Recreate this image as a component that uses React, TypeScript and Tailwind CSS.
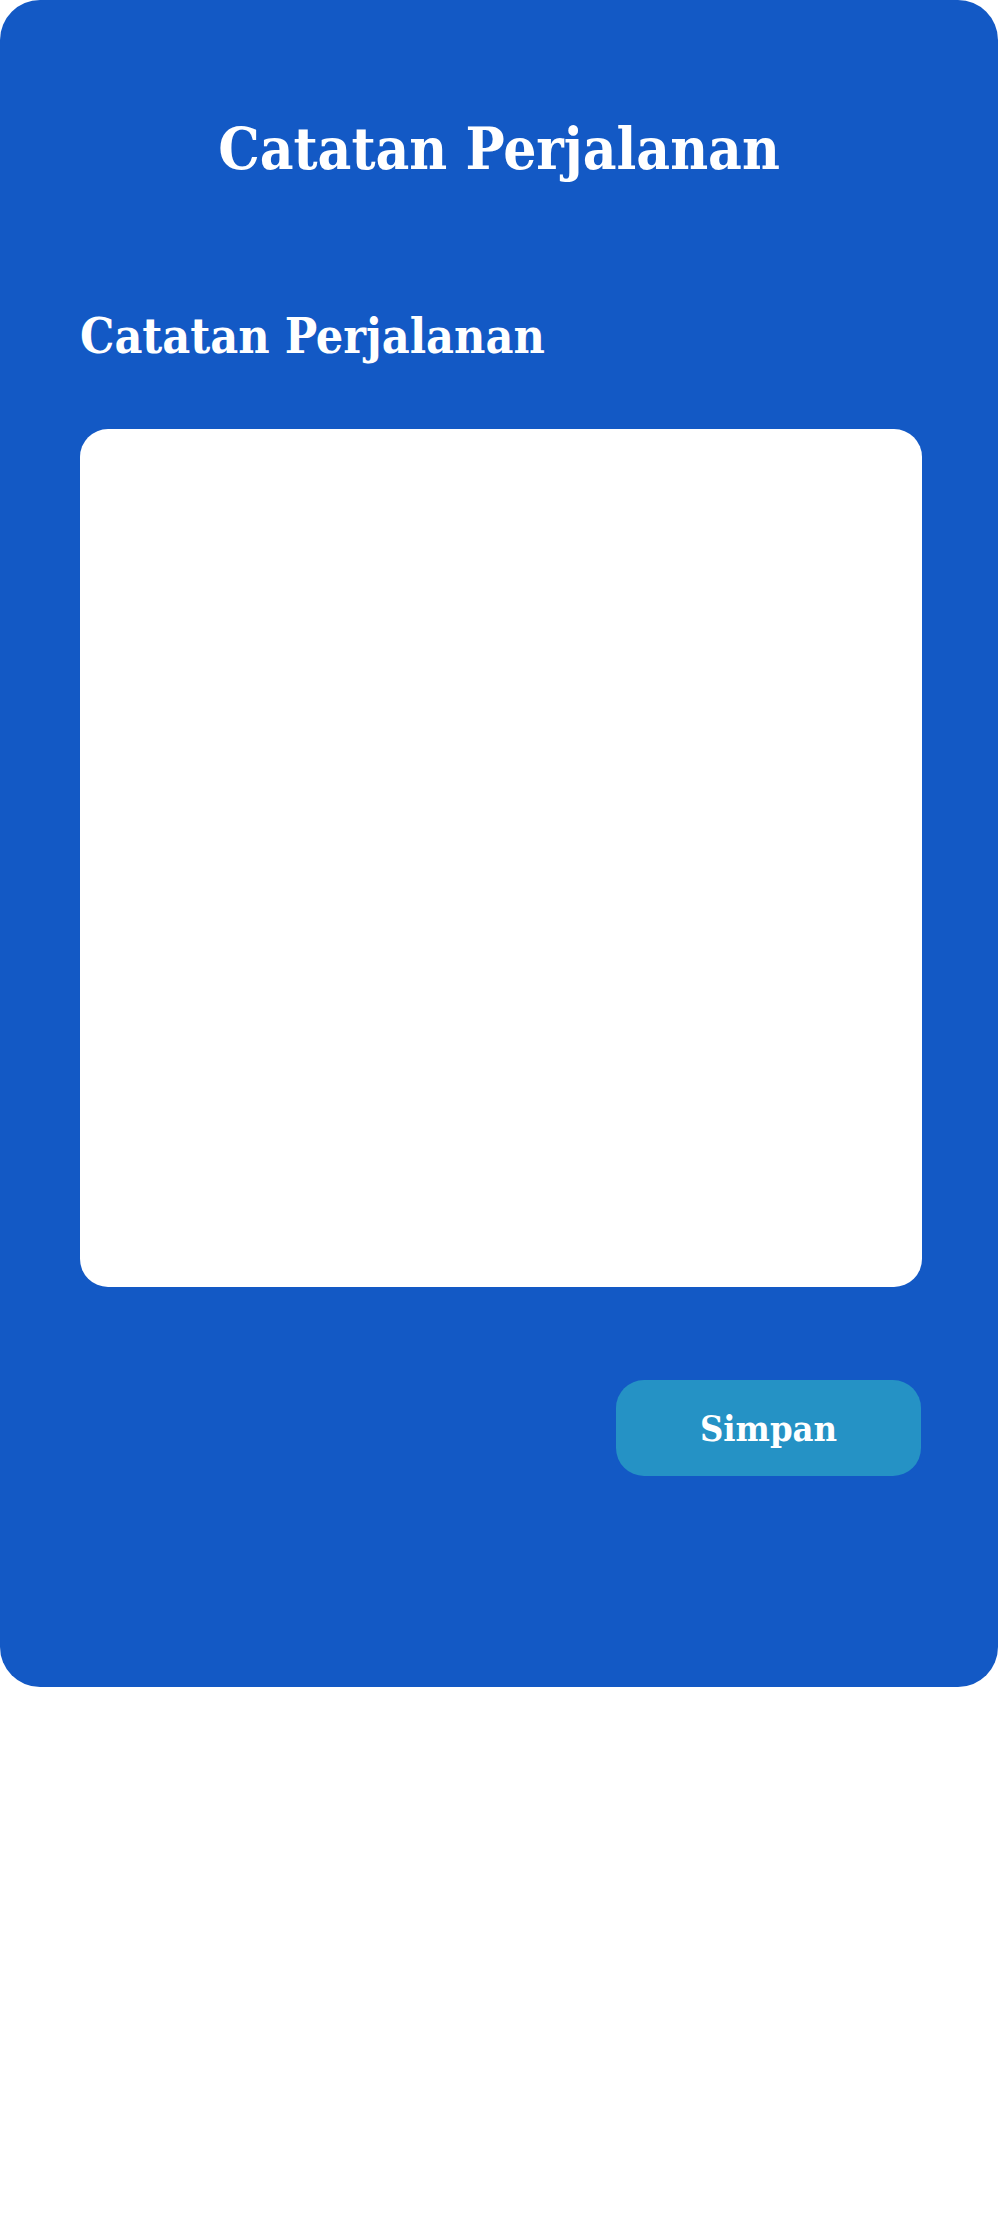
import React from "react";

function TravelNote() {
  return (
    <div className="w-[998px] h-[1687px] rounded-[40px] bg-[#1359c5] px-[80px] flex flex-col font-['DejaVu_Serif_Condensed','DejaVu_Serif',serif] font-stretch-condensed text-white">
      <h1 className="mt-[120px] text-center text-[58px] leading-none font-bold">
        Catatan Perjalanan
      </h1>
      <h2 className="mt-[134px] text-5xl leading-none font-bold">Catatan Perjalanan</h2>
      <div className="mt-[69px] h-[858px] w-[842px] rounded-[28px] bg-white" />
      <div className="mt-[93px] flex justify-end">
        <button className="w-[305px] h-[96px] mr-[-3px] rounded-[28px] bg-[#2592c5] text-4xl font-bold text-white">
          Simpan
        </button>
      </div>
    </div>
  );
}

export default function App() {
  return (
    <div className="min-h-[2223px] w-full bg-white">
      <TravelNote />
    </div>
  );
}
